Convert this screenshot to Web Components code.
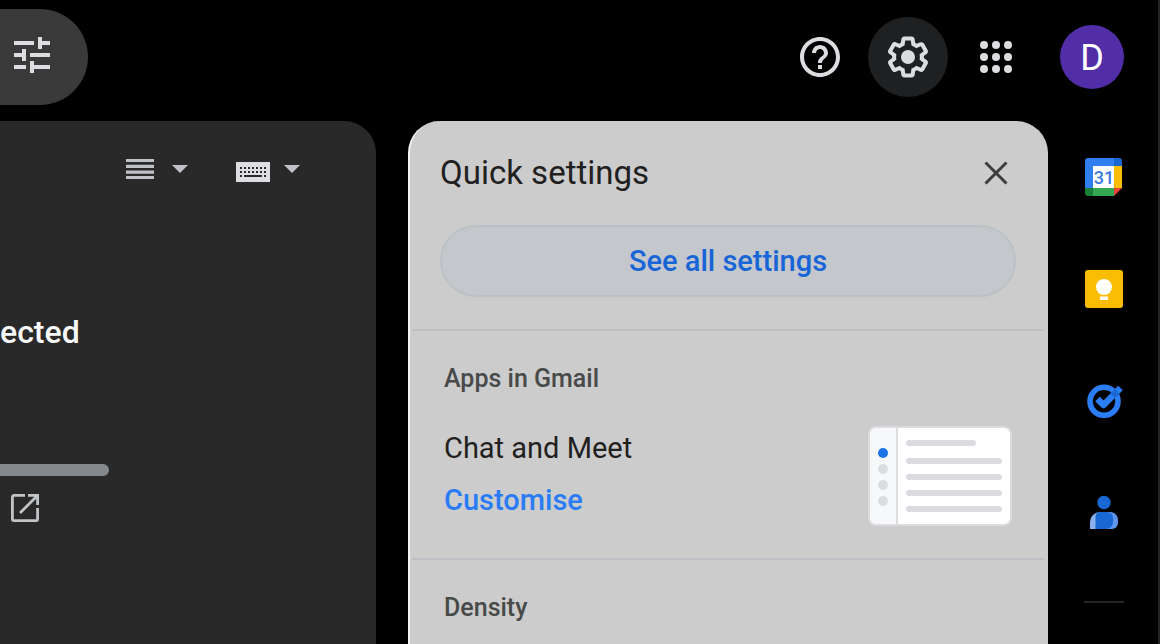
<!DOCTYPE html>
<html lang="en-GB">
<head>
<meta charset="utf-8">
<meta name="viewport" content="width=device-width, initial-scale=1">
<title>Gmail</title>
<style>
  html, body { margin: 0; height: 100%; background: #000; overflow: hidden; }
  body { font-family: Roboto, "Noto Sans", sans-serif; }
</style>
</head>
<body>
<gm-app></gm-app>

<template id="gm-app">
  <style>
    :host { display: grid; grid-template-rows: auto 1fr; height: 100vh; box-sizing: border-box; background: #000; border-right: 2px solid #232425; }
    main { display: flex; min-height: 0; }
    gm-mail { flex: 1; min-width: 0; margin-right: 32px; }
    gm-quick-settings { flex: 0 1 640px; }
    gm-side-panel { flex: none; width: 110px; }
  </style>
  <gm-header></gm-header>
  <main>
    <gm-mail></gm-mail>
    <gm-quick-settings></gm-quick-settings>
    <gm-side-panel></gm-side-panel>
  </main>
</template>

<template id="gm-icon-button">
  <style>
    :host { display: block; flex: none; }
    button { display: grid; place-items: center; width: var(--size, 80px); height: var(--size, 80px); padding: 0; border: 0; border-radius: 50%; background: var(--bg, transparent); color: inherit; cursor: pointer; }
  </style>
  <button type="button"><slot></slot></button>
</template>

<template id="gm-header">
  <style>
    :host { display: flex; align-items: center; gap: 8px; padding: 9px 34px 16px 0; color: #dcdde1; }
    svg { display: block; width: 48px; height: 48px; fill: currentColor; }
    .search { display: flex; align-items: center; box-sizing: border-box; height: 96px; padding: 0 32px 4px 8px; margin-right: auto; border: 0; border-radius: 0 48px 48px 0; background: #3a3a3a; color: inherit; }
    .on { --bg: #1f2022; }
    .avatar { box-sizing: border-box; width: 64px; height: 64px; margin-left: 16px; padding-top: 2px; border-radius: 50%; background: #512da8; color: #fff; font-size: 36px; line-height: 62px; text-align: center; text-decoration: none; }
  </style>
  <button class="search" type="button" aria-label="Search options">
    <svg viewBox="0 0 24 24"><path d="M3 17v2h6v-2H3zM3 5v2h10V5H3zm10 16v-2h8v-2h-8v-2h-2v6h2zM7 9v2H3v2h4v2h2V9H7zm14 4v-2H11v2h10zm-6-4h2V7h4V5h-4V3h-2v6z"/></svg>
  </button>
  <gm-icon-button label="Support"><svg viewBox="0 0 24 24"><path d="M11 18h2v-2h-2v2zm1-16C6.480 2 2 6.480 2 12s4.480 10 10 10 10-4.480 10-10S17.520 2 12 2zm0 18c-4.410 0-8-3.590-8-8s3.590-8 8-8 8 3.590 8 8-3.590 8-8 8zm0-14c-2.210 0-4 1.790-4 4h2c0-1.100.9-2 2-2s2 .9 2 2c0 2-3 1.750-3 5h2c0-2.250 3-2.500 3-5 0-2.210-1.790-4-4-4z"/></svg></gm-icon-button>
  <gm-icon-button class="on" label="Settings"><svg viewBox="0 0 24 24"><path d="M13.85 22.25h-3.7c-.74 0-1.36-.54-1.45-1.27l-.27-1.89c-.27-.14-.53-.29-.79-.46l-1.8.72c-.7.26-1.47-.03-1.81-.65L2.2 15.53c-.35-.66-.2-1.44.36-1.88l1.53-1.19c-.01-.15-.02-.3-.02-.46 0-.15.01-.31.02-.46l-1.52-1.19c-.59-.45-.74-1.26-.37-1.88l1.85-3.19c.34-.62 1.11-.9 1.79-.63l1.81.73c.26-.17.52-.32.78-.46l.27-1.91c.09-.7.71-1.25 1.44-1.25h3.7c.74 0 1.36.54 1.45 1.27l.27 1.89c.27.14.53.29.79.46l1.8-.72c.71-.26 1.48.03 1.82.65l1.84 3.18c.36.66.2 1.44-.36 1.88l-1.52 1.19c.01.15.02.3.02.46s-.01.31-.02.46l1.52 1.19c.56.45.72 1.23.37 1.86l-1.86 3.22c-.34.62-1.11.9-1.8.63l-1.8-.72c-.26.17-.52.32-.78.46l-.27 1.91c-.1.68-.72 1.22-1.46 1.22zm-3.23-2h2.76l.37-2.55.53-.22c.44-.18.88-.44 1.34-.78l.45-.34 2.38.96 1.38-2.4-2.03-1.58.07-.56c.03-.26.06-.51.06-.78s-.03-.53-.06-.78l-.07-.56 2.03-1.58-1.39-2.4-2.39.96-.45-.35c-.42-.32-.87-.58-1.33-.77l-.52-.22-.37-2.55h-2.76l-.37 2.55-.53.21c-.44.19-.88.44-1.34.79l-.45.33-2.38-.95-1.39 2.39 2.03 1.58-.07.56a7 7 0 0 0-.06.79c0 .26.02.53.06.78l.07.56-2.03 1.58 1.38 2.4 2.39-.96.45.35c.43.33.86.58 1.33.77l.53.22.38 2.55z"/><circle cx="12" cy="12" r="3.5"/></svg></gm-icon-button>
  <gm-icon-button label="Google apps"><svg viewBox="0 0 24 24"><circle cx="6" cy="6" r="2"/><circle cx="12" cy="6" r="2"/><circle cx="18" cy="6" r="2"/><circle cx="6" cy="12" r="2"/><circle cx="12" cy="12" r="2"/><circle cx="18" cy="12" r="2"/><circle cx="6" cy="18" r="2"/><circle cx="12" cy="18" r="2"/><circle cx="18" cy="18" r="2"/></svg></gm-icon-button>
  <a class="avatar" href="#account">D</a>
</template>

<template id="gm-mail">
  <style>
    :host { display: flex; flex-direction: column; box-sizing: border-box; background: #292929; border-radius: 0 32px 0 0; overflow: hidden; }
    .tools { display: flex; justify-content: flex-end; gap: 48px; padding: 32px 76px 0 0; }
    button { display: flex; align-items: center; padding: 0; border: 0; background: none; color: #bec1c5; }
    svg { display: block; fill: currentColor; }
    .split { height: 32px; }
    .first { gap: 18px; }
    .second { gap: 14px; }
    p { margin: 127px 0 0; color: #f8f9fa; font-size: 32px; font-weight: 500; line-height: 40px; }
    .storage { height: 12px; width: 109px; margin-top: 112px; border-radius: 0 6px 6px 0; background: #85898b; }
    .open { display: block; align-self: flex-start; margin: 17px 0 0 10px; color: #c1c4c7; }
  </style>
  <div class="tools">
    <button class="split first" type="button" aria-label="Split pane mode">
      <svg width="28" height="20" viewBox="0 0 28 20"><path d="M0 0h28v3H0zM0 5.7h28v3.3H0zM0 11.4h28v3.3H0zM0 17h28v3H0z"/></svg>
      <svg width="16" height="8" viewBox="0 0 16 8"><path d="M0 0h16L8 8z"/></svg>
    </button>
    <button class="split second" type="button" aria-label="Input tools">
      <svg width="34" height="26" viewBox="0 0 34 26"><path fill="#dcdee1" d="M0 6h34v20H0z"/><path stroke="#292929" stroke-width="2" stroke-dasharray="2 2" d="M4 12h26M4 16h26"/><path fill="#292929" d="M4 19h2v2H4zM8 19h18v2H8zM28 19h2v2h-2z"/></svg>
      <svg width="16" height="8" viewBox="0 0 16 8"><path d="M0 0h16L8 8z"/></svg>
    </button>
  </div>
  <p>ected</p>
  <div class="storage"></div>
  <button class="open" type="button" aria-label="Manage storage"><svg width="30" height="30" viewBox="0 0 30 30"><path fill="none" stroke="currentColor" stroke-width="2.800" d="M15 2.400H4a1.600 1.600 0 0 0-1.600 1.600v22a1.600 1.600 0 0 0 1.600 1.600h22a1.600 1.600 0 0 0 1.600-1.600V15M18 2.400h9.600V12M27 3L10 20"/></svg></button>
</template>

<template id="gm-quick-settings">
  <style>
    :host { display: block; box-sizing: border-box; min-width: 0; background: #ccc; border-left: 2px solid #f4f4f4; border-radius: 32px 32px 0 0; overflow: hidden; color: #1f2020; }
    header { display: flex; align-items: center; justify-content: space-between; height: 104px; padding: 0 32px 0 30px; }
    h1 { margin: 0; font-size: 33px; font-weight: 400; line-height: 40px; }
    .close { --size: 40px; color: #3c3d3d; }
    svg { display: block; }
    .all { display: block; width: calc(100% - 62px); height: 72px; margin: 0 32px 32px 30px; padding: 0; border: 2px solid #bcc1c5; border-radius: 36px; background: #c4c8cd; color: #1765d6; font: 500 29px/40px Roboto, "Noto Sans", sans-serif; }
    .row { display: flex; align-items: center; justify-content: space-between; }
    .text { padding-bottom: 4px; }
    .name, .link { display: block; margin: 0; font-size: 29px; line-height: 40px; }
    .link { margin-top: 12px; color: #2a7bf6; font-weight: 500; text-decoration: none; }
  </style>
  <header>
    <h1>Quick settings</h1>
    <gm-icon-button class="close" label="Close"><svg width="24" height="24" viewBox="0 0 24 24"><path fill="none" stroke="currentColor" stroke-width="3" d="M1.500 1.500l21 21M22.500 1.500l-21 21"/></svg></gm-icon-button>
  </header>
  <button class="all" type="button">See all settings</button>
  <gm-section heading="Apps in Gmail">
    <div class="row">
      <div class="text">
        <p class="name">Chat and Meet</p>
        <a class="link" href="#customise">Customise</a>
      </div>
      <svg width="144" height="100" viewBox="0 0 144 100">
        <rect x="1" y="1" width="142" height="98" rx="7" fill="#fff" stroke="#dadce0" stroke-width="2"/>
        <path fill="#f6f8fa" d="M8 2h20v96H8a6 6 0 0 1-6-6V8a6 6 0 0 1 6-6z"/>
        <path fill="#dadce0" d="M28 2h2v96h-2z"/>
        <circle cx="15" cy="27" r="5" fill="#1a73e8"/>
        <g fill="#dadce0"><circle cx="15" cy="43" r="5"/><circle cx="15" cy="59" r="5"/><circle cx="15" cy="75" r="5"/></g>
        <path fill="none" stroke="#dadce0" stroke-width="6" stroke-linecap="round" d="M41 17h64M41 35h90M41 51h90M41 67h90M41 83h90"/>
      </svg>
    </div>
  </gm-section>
  <gm-section heading="Density"></gm-section>
</template>

<template id="gm-section">
  <style>
    :host { display: block; margin: 0 4px 0 2px; padding: 32px; border-top: 2px solid #bcc0c4; }
    h2 { margin: 0 0 31px; color: #484a4a; font-size: 25px; font-weight: 500; line-height: 32px; }
  </style>
  <h2></h2>
  <slot></slot>
</template>

<template id="gm-side-panel">
  <style>
    :host { display: flex; flex-direction: column; align-items: center; gap: 72px; box-sizing: border-box; padding: 36px 0 0 2px; }
    gm-icon-button { --size: 40px; }
    hr { width: 40px; height: 2px; margin: -4px 0 0; border: 0; background: #232424; }
    svg { display: block; }
    text { font: 500 18px Roboto, sans-serif; }
  </style>
  <gm-icon-button label="Calendar"><svg width="40" height="40" viewBox="0 0 40 40">
    <path fill="#2f7ff0" d="M4 1h26v8H9v22H1V4a3 3 0 0 1 3-3z"/><path fill="#1967d2" d="M30 1h5a3 3 0 0 1 3 3v5h-8z"/><path fill="#fbbc04" d="M30 9h8v22h-8z"/><path fill="#34a853" d="M9 31h21v8H9z"/><path fill="#188038" d="M1 31h8v8H4a3 3 0 0 1-3-3z"/><path fill="#ea4335" d="M30 31h8l-8 8z"/><path fill="#fff" d="M9 9h21v22H9z"/>
    <text x="20" y="27" text-anchor="middle" fill="#3b78e0">31</text></svg></gm-icon-button>
  <gm-icon-button label="Keep"><svg width="40" height="40" viewBox="0 0 40 40">
    <rect x="1" y="1" width="38" height="38" rx="3" fill="#fbbc04"/><circle cx="20" cy="18" r="8" fill="#fff"/><path fill="#fff" d="M16 23h8v2h-8zM16 27.500h8V31h-8z"/></svg></gm-icon-button>
  <gm-icon-button label="Tasks"><svg width="40" height="40" viewBox="0 0 40 40">
    <circle cx="20" cy="20.300" r="14" fill="none" stroke="#2a7df5" stroke-width="5.600"/><path fill="none" stroke="#2a7df5" stroke-width="6.500" stroke-linejoin="round" d="M13.500 18l6 6L36.500 7"/><path fill="#1967d2" d="M26.400 12.500l4.600-4.600 4.600 4.600-4.600 4.600z"/></svg></gm-icon-button>
  <gm-icon-button label="Contacts"><svg width="40" height="40" viewBox="0 0 40 40">
    <circle cx="20" cy="9.500" r="6.700" fill="#1967d2"/><path fill="#8ab0ee" d="M16 19h8v17H6V29a10 10 0 0 1 10-10z"/><path fill="#6095ec" d="M22 19h4a8 8 0 0 1 8 8v3a6 6 0 0 1-6 6h-6z"/><path fill="#1967d2" d="M16 19h7a6 6 0 0 1 6 6v4a7 7 0 0 1-7 7H11.500V24a5 5 0 0 1 4.500-5z"/></svg></gm-icon-button>
  <hr>
</template>

<script>
  class GmElement extends HTMLElement {
    constructor() {
      super();
      const template = document.getElementById(this.localName);
      this.attachShadow({ mode: "open" }).append(template.content.cloneNode(true));
    }
  }

  class GmIconButton extends GmElement {
    connectedCallback() {
      this.shadowRoot.querySelector("button").setAttribute("aria-label", this.getAttribute("label") || "");
    }
  }

  class GmSection extends GmElement {
    connectedCallback() {
      this.shadowRoot.querySelector("h2").textContent = this.getAttribute("heading");
    }
  }

  customElements.define("gm-icon-button", GmIconButton);
  customElements.define("gm-section", GmSection);
  customElements.define("gm-header", class extends GmElement {});
  customElements.define("gm-mail", class extends GmElement {});
  customElements.define("gm-quick-settings", class extends GmElement {});
  customElements.define("gm-side-panel", class extends GmElement {});
  customElements.define("gm-app", class extends GmElement {});
</script>
</body>
</html>
